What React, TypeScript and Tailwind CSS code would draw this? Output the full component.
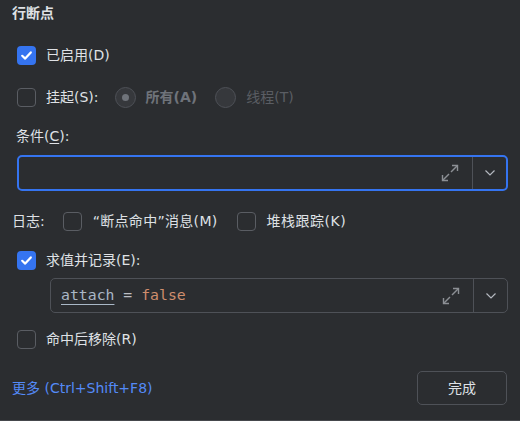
import React from "react";

const font = { fontFamily: '"DejaVu Sans", "Noto Sans CJK SC", sans-serif' };

function Check({ checked }: { checked?: boolean }) {
  if (checked) {
    return (
      <span className="flex h-[19px] w-[19px] shrink-0 items-center justify-center rounded-[4px] bg-[#3574f0]">
        <svg width="13" height="13" viewBox="0 0 13 13" fill="none">
          <path d="M2.2 6.8 L5.2 9.6 L10.8 3.4" stroke="#ffffff" strokeWidth="2.2" strokeLinecap="round" strokeLinejoin="round" />
        </svg>
      </span>
    );
  }
  return <span className="block h-[19px] w-[19px] shrink-0 rounded-[4px] border border-[#5a5d63]" />;
}

function Radio({ selected }: { selected?: boolean }) {
  return (
    <span className="flex h-[21px] w-[21px] shrink-0 items-center justify-center rounded-full border border-[#4e5157] bg-[#36383c]">
      {selected && <span className="block h-[7px] w-[7px] rounded-full bg-[#6f737a]" />}
    </span>
  );
}

function ExpandIcon() {
  return (
    <svg width="20" height="20" viewBox="0 0 20 20" fill="none" stroke="#8c8f94" strokeWidth="1.4">
      <path d="M11 9 L17.5 2.5" />
      <path d="M12 2.5 H17.5 V8" />
      <path d="M9 11 L2.5 17.5" />
      <path d="M2.5 12 V17.5 H8" />
    </svg>
  );
}

function Chevron() {
  return (
    <svg width="12" height="8" viewBox="0 0 12 8" fill="none" stroke="#b4b8bf" strokeWidth="1.2">
      <path d="M1.5 1.5 L6 6 L10.5 1.5" />
    </svg>
  );
}

function Field({ focused, children }: { focused?: boolean; children?: React.ReactNode }) {
  return (
    <div
      className={
        focused
          ? "flex h-[36px] items-stretch rounded-[5px] border-2 border-[#3574f0]"
          : "flex h-[35px] items-stretch rounded-[5px] border border-[#4e5157]"
      }
    >
      <div className="flex flex-1 items-center pl-[10px]">{children}</div>
      <div className="flex w-[44px] items-center justify-center">
        <ExpandIcon />
      </div>
      <div className="w-px bg-[#4e5157]" />
      <div className="flex w-[33px] items-center justify-center">
        <Chevron />
      </div>
    </div>
  );
}

export default function App() {
  return (
    <div
      style={font}
      className="flex h-[421px] w-[520px] flex-col border-b border-[#45474c] bg-[#2b2d30] text-[14px] text-[#dfe1e5]"
    >
      <div className="ml-[12px] mt-[3px] flex h-[20px] items-center font-bold">行断点</div>

      <div className="ml-[17px] mt-[20px] flex h-[24px] items-center gap-[10px]">
        <Check checked />
        <span>已启用(D)</span>
      </div>

      <div className="ml-[17px] mt-[18px] flex h-[24px] items-center">
        <Check />
        <span className="ml-[10px]">挂起(S):</span>
        <span className="ml-[16px]">
          <Radio selected />
        </span>
        <span className="ml-[10px] font-bold text-[#6f737a]">所有(A)</span>
        <span className="ml-[18px]">
          <Radio />
        </span>
        <span className="ml-[10px] text-[#5a5d63]">线程(T)</span>
      </div>

      <div className="ml-[16px] mt-[17px] flex h-[20px] items-center">
        条件(<span className="underline underline-offset-2">C</span>):
      </div>

      <div className="ml-[17px] mr-[12px] mt-[9px]">
        <Field focused />
      </div>

      <div className="ml-[12px] mt-[18px] flex h-[24px] items-center">
        <span>日志:</span>
        <span className="ml-[18px]">
          <Check />
        </span>
        <span className="ml-[11px] tracking-[0.3px]">“断点命中”消息(M)</span>
        <span className="ml-[19px]">
          <Check />
        </span>
        <span className="ml-[11px] tracking-[0.5px]">堆栈跟踪(K)</span>
      </div>

      <div className="ml-[17px] mt-[15px] flex h-[24px] items-center gap-[10px]">
        <Check checked />
        <span>求值并记录(E):</span>
      </div>

      <div className="ml-[50px] mr-[12px] mt-[6px]">
        <Field>
          <span style={{ fontFamily: '"DejaVu Sans Mono", monospace' }} className="text-[14.8px] whitespace-pre">
            <span className="text-[#a9b7c6] underline underline-offset-[4px] decoration-[#a9b7c6]">attach</span>
            <span className="text-[#bcbec4]"> = </span>
            <span className="text-[#cf8e6d]">false</span>
          </span>
        </Field>
      </div>

      <div className="ml-[17px] mt-[14px] flex h-[24px] items-center gap-[10px]">
        <Check />
        <span>命中后移除(R)</span>
      </div>

      <div className="ml-[12px] mr-[13px] mt-[20px] flex h-[34px] items-center justify-between">
        <span className="text-[#548af7]">更多 (Ctrl+Shift+F8)</span>
        <button className="flex h-[34px] w-[90px] items-center justify-center rounded-[5px] border border-[#4e5157] text-[#dfe1e5]">
          完成
        </button>
      </div>
    </div>
  );
}
